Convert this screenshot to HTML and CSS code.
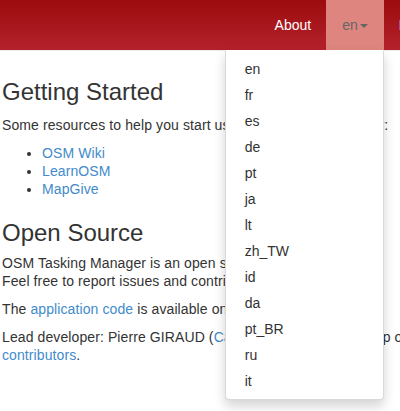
FILE: index.html
```html
<!DOCTYPE html>
<html lang="en">
<head>
<meta charset="utf-8">
<title>OSM Tasking Manager - About</title>
<link rel="stylesheet" href="styles.css">
</head>
<body>
<div class="page">
  <nav class="navbar">
    <ul class="nav">
      <li><a href="#">About</a></li>
      <li class="dropdown open">
        <a href="#" class="active">en<span class="caret"></span></a>
        <ul class="dropdown-menu">
          <li><a href="#">en</a></li>
          <li><a href="#">fr</a></li>
          <li><a href="#">es</a></li>
          <li><a href="#">de</a></li>
          <li><a href="#">pt</a></li>
          <li><a href="#">ja</a></li>
          <li><a href="#">lt</a></li>
          <li><a href="#">zh_TW</a></li>
          <li><a href="#">id</a></li>
          <li><a href="#">da</a></li>
          <li><a href="#">pt_BR</a></li>
          <li><a href="#">ru</a></li>
          <li><a href="#">it</a></li>
        </ul>
      </li>
      <li><a href="#" class="last">Login</a></li>
    </ul>
  </nav>
  <main class="container">
    <h2>Getting Started</h2>
    <p class="intro">Some resources to help you start using the Tasking Manager:</p>
    <ul class="links">
      <li><a href="#">OSM Wiki</a></li>
      <li><a href="#">LearnOSM</a></li>
      <li><a href="#">MapGive</a></li>
    </ul>
    <h2>Open Source</h2>
    <p>OSM Tasking Manager is an open source software.<br>Feel free to report issues and contribute.</p>
    <p>The <a href="#">application code</a> is available on github.</p>
    <p>Lead developer: Pierre GIRAUD (<a href="#">Camptocamp</a>), with the help of <a href="#">contributors</a>.</p>
  </main>
</div>
</body>
</html>
```

FILE: styles.css
```css
html {
  overflow: hidden;
}
html, body {
  margin: 0;
  padding: 0;
  background: #fff;
}
body {
  font-family: "Liberation Sans", Arial, sans-serif;
  font-size: 14px;
  line-height: 18px;
  color: #333;
}
a {
  color: #428bca;
  text-decoration: none;
}
.page {
  width: 446px;
  min-height: 411px;
}
.navbar {
  height: 50px;
  border-bottom: 1px solid #ececec;
  background: linear-gradient(to bottom, #9c0c0d 0%, #b4212c 100%);
  display: flex;
  justify-content: flex-end;
}
.nav {
  display: flex;
  list-style: none;
  margin: 0;
  padding: 0;
}
.nav > li {
  position: relative;
}
.nav > li > a {
  display: block;
  padding: 15px;
  line-height: 20px;
  color: #fff;
}
.nav > li > a.active {
  background: #df857f;
  color: #666;
  padding: 15px 16px;
}
.nav > li > a.last {
  padding-left: 15px;
  padding-right: 13px;
}
.caret {
  display: inline-block;
  width: 0;
  height: 0;
  margin-left: 2px;
  vertical-align: middle;
  border-top: 4px solid;
  border-left: 4px solid transparent;
  border-right: 4px solid transparent;
}
.dropdown-menu {
  position: absolute;
  top: 100%;
  right: 0;
  box-sizing: border-box;
  min-width: 159px;
  margin: 0;
  padding: 5px 0;
  list-style: none;
  background: #fff;
  border: 1px solid rgba(0, 0, 0, 0.15);
  border-top-color: transparent;
  border-radius: 0 0 4px 4px;
  box-shadow: 0 6px 12px rgba(0, 0, 0, 0.175);
  z-index: 10;
}
.dropdown-menu a {
  display: block;
  padding: 3px 20px 3px 19px;
  line-height: 20px;
  color: #333;
  white-space: nowrap;
}
.container {
  width: 420px;
  padding: 6px 2px 0;
  letter-spacing: 0.1px;
}
h2 {
  font-size: 24px;
  font-weight: 500;
  line-height: 26px;
  margin: 22px 0 8px;
  letter-spacing: 0;
}
p {
  margin: 0 0 10px;
}
.intro {
  margin-top: 11px;
}
.links {
  margin: 0 0 9px;
  padding-left: 40px;
}
```
